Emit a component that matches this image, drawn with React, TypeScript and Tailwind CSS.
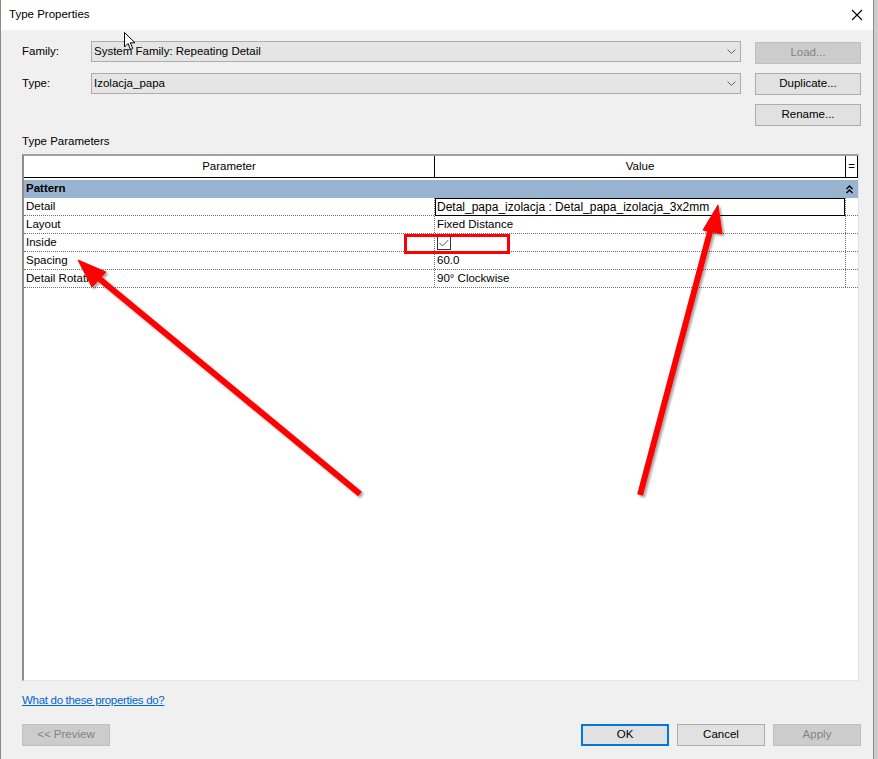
import React from "react"

const font = { fontFamily: '"Liberation Sans", Arial, sans-serif' }

const params = [
  { name: "Detail", value: "Detal_papa_izolacja : Detal_papa_izolacja_3x2mm", editing: true },
  { name: "Layout", value: "Fixed Distance" },
  { name: "Inside", value: "", check: true },
  { name: "Spacing", value: "60.0" },
  { name: "Detail Rotation", value: "90° Clockwise" },
]

function Chevron() {
  return (
    <svg width="9" height="6" viewBox="0 0 9 6" className="shrink-0">
      <path d="M0.5 0.5 L4.5 4.5 L8.5 0.5" fill="none" stroke="#606060" strokeWidth="1" />
    </svg>
  )
}

function Combo({ text }: { text: string }) {
  return (
    <div className="flex h-[21px] w-[650px] items-center justify-between border border-[#adadad] bg-[#e5e5e5] pl-[2px] pr-[4px] text-[11.5px] text-black">
      <span>{text}</span>
      <Chevron />
    </div>
  )
}

function Btn({ label, disabled, focused, w = "w-[106px]" }: { label: string; disabled?: boolean; focused?: boolean; w?: string }) {
  let cls = "border border-[#adadad] bg-[#e1e1e1] text-black"
  if (disabled) cls = "border border-[#bfbfbf] bg-[#cccccc] text-[#838383]"
  if (focused) cls = "border-2 border-[#0078d7] bg-[#e1e1e1] text-black"
  return (
    <div className={`flex h-[22px] ${w} items-center justify-center text-[11.5px] ${cls}`}>{label}</div>
  )
}

function Arrows() {
  return (
    <svg className="pointer-events-none absolute left-0 top-0" width="878" height="759" viewBox="0 0 878 759">
      <defs>
        <filter id="sh" x="-20%" y="-20%" width="140%" height="140%">
          <feDropShadow dx="2" dy="2" stdDeviation="1.2" floodColor="#000" floodOpacity="0.35" />
        </filter>
      </defs>
      <g filter="url(#sh)" fill="#ff0000" stroke="#ff0000">
        <line x1="360" y1="494" x2="96" y2="276" strokeWidth="6" />
        <polygon points="78,260 106,272 92,287" strokeWidth="1" />
        <line x1="640" y1="495" x2="711" y2="228" strokeWidth="6" />
        <polygon points="718,205 703,230 722,234" strokeWidth="1" />
      </g>
    </svg>
  )
}

function Cursor() {
  return (
    <svg className="pointer-events-none absolute left-[124px] top-[32px]" width="14" height="20" viewBox="0 0 14 20">
      <path d="M0.5 0.5 L0.5 15 L4 11.5 L6.5 17.5 L8.8 16.5 L6.3 10.8 L11 10.8 Z" fill="#fff" stroke="#000" strokeWidth="1" />
    </svg>
  )
}

export default function App() {
  return (
    <div className="relative flex h-[759px] w-[878px] overflow-hidden bg-[#c9ccc9]" style={font}>
      {/* dialog */}
      <div className="flex h-full w-[874px] flex-col border-l border-r border-[#8a8a8a] bg-[#f0f0f0]">
        {/* title bar */}
        <div className="flex h-[30px] items-center justify-between bg-white pl-[8px] pr-[10px]">
          <span className="text-[11.5px] text-black">Type Properties</span>
          <svg width="12" height="12" viewBox="0 0 12 12">
            <path d="M1 1 L11 11 M11 1 L1 11" stroke="#000" strokeWidth="1.1" />
          </svg>
        </div>

        {/* family / type */}
        <div className="flex pl-[21px] pt-[11px]">
          <div className="flex flex-col gap-[11px]">
            <div className="flex items-center">
              <span className="w-[69px] text-[11.5px] text-black">Family:</span>
              <Combo text="System Family: Repeating Detail" />
            </div>
            <div className="flex items-center">
              <span className="w-[69px] text-[11.5px] text-black">Type:</span>
              <Combo text="Izolacja_papa" />
            </div>
          </div>
          <div className="ml-[14px] flex flex-col gap-[9px] pt-[1px]">
            <Btn label="Load..." disabled />
            <Btn label="Duplicate..." />
            <Btn label="Rename..." />
          </div>
        </div>

        <div className="ml-[21px] mt-[8px] h-[15px] text-[11.5px] leading-[15px] text-black">Type Parameters</div>

        {/* table */}
        <div className="ml-[21px] mt-[5px] flex h-[527px] w-[837px] flex-col border-l-2 border-t-2 border-r border-b border-l-[#8c8c8c] border-t-[#a0a0a0] border-r-[#e3e3e3] border-b-[#e3e3e3] bg-white text-[11.5px] text-black">
          <div className="flex h-[22px] border-b border-black">
            <div className="flex w-[411px] items-center justify-center border-r border-black">Parameter</div>
            <div className="flex w-[411px] items-center justify-center border-r border-black">Value</div>
            <div className="flex flex-1 items-center justify-center border-r border-black">=</div>
          </div>
          <div className="mt-[2px] flex h-[18px] items-center justify-between bg-[#99b4d1] pl-[2px] pr-[5px]">
            <span className="font-bold">Pattern</span>
            <svg width="7" height="9" viewBox="0 0 7 9">
              <path d="M0.5 4 L3.5 1 L6.5 4 M0.5 8 L3.5 5 L6.5 8" fill="none" stroke="#000" strokeWidth="1.4" />
            </svg>
          </div>
          {params.map((p) => (
            <div key={p.name} className="flex h-[18px] border-b border-dotted border-[#707070]">
              <div className="flex w-[411px] items-center border-r border-dotted border-[#707070] pl-[2px]">{p.name}</div>
              <div className="flex w-[411px] items-center border-r border-dotted border-[#707070]">
                {p.editing ? (
                  <div className="flex h-[18px] w-full items-center border border-black pl-[1px] text-[12px]">{p.value}</div>
                ) : p.check ? (
                  <div className="ml-[2px] flex h-[14px] w-[14px] items-center justify-center border border-[#333] bg-white">
                    <svg width="10" height="8" viewBox="0 0 10 8">
                      <path d="M0.5 4 L3.5 7 L9.5 0.8" fill="none" stroke="#555" strokeWidth="1" />
                    </svg>
                  </div>
                ) : (
                  <span className="pl-[2px]">{p.value}</span>
                )}
              </div>
              <div className="flex-1" />
            </div>
          ))}
        </div>

        <div className="ml-[21px] mt-[12px] h-[14px] text-[11.5px] leading-[14px] tracking-[-0.3px] text-[#0066cc] underline">What do these properties do?</div>

        <div className="mt-[17px] flex pl-[21px] pr-[12px]">
          <Btn label="<< Preview" disabled w="w-[88px]" />
          <div className="flex-1" />
          <div className="flex gap-[8px]">
            <Btn label="OK" focused w="w-[88px]" />
            <Btn label="Cancel" w="w-[88px]" />
            <Btn label="Apply" disabled w="w-[88px]" />
          </div>
        </div>
      </div>

      {/* annotations */}
      <div className="pointer-events-none absolute left-[404px] top-[234px] h-[20px] w-[106px] border-[3px] border-[#ff0000]" />
      <Arrows />
      <Cursor />
    </div>
  )
}
